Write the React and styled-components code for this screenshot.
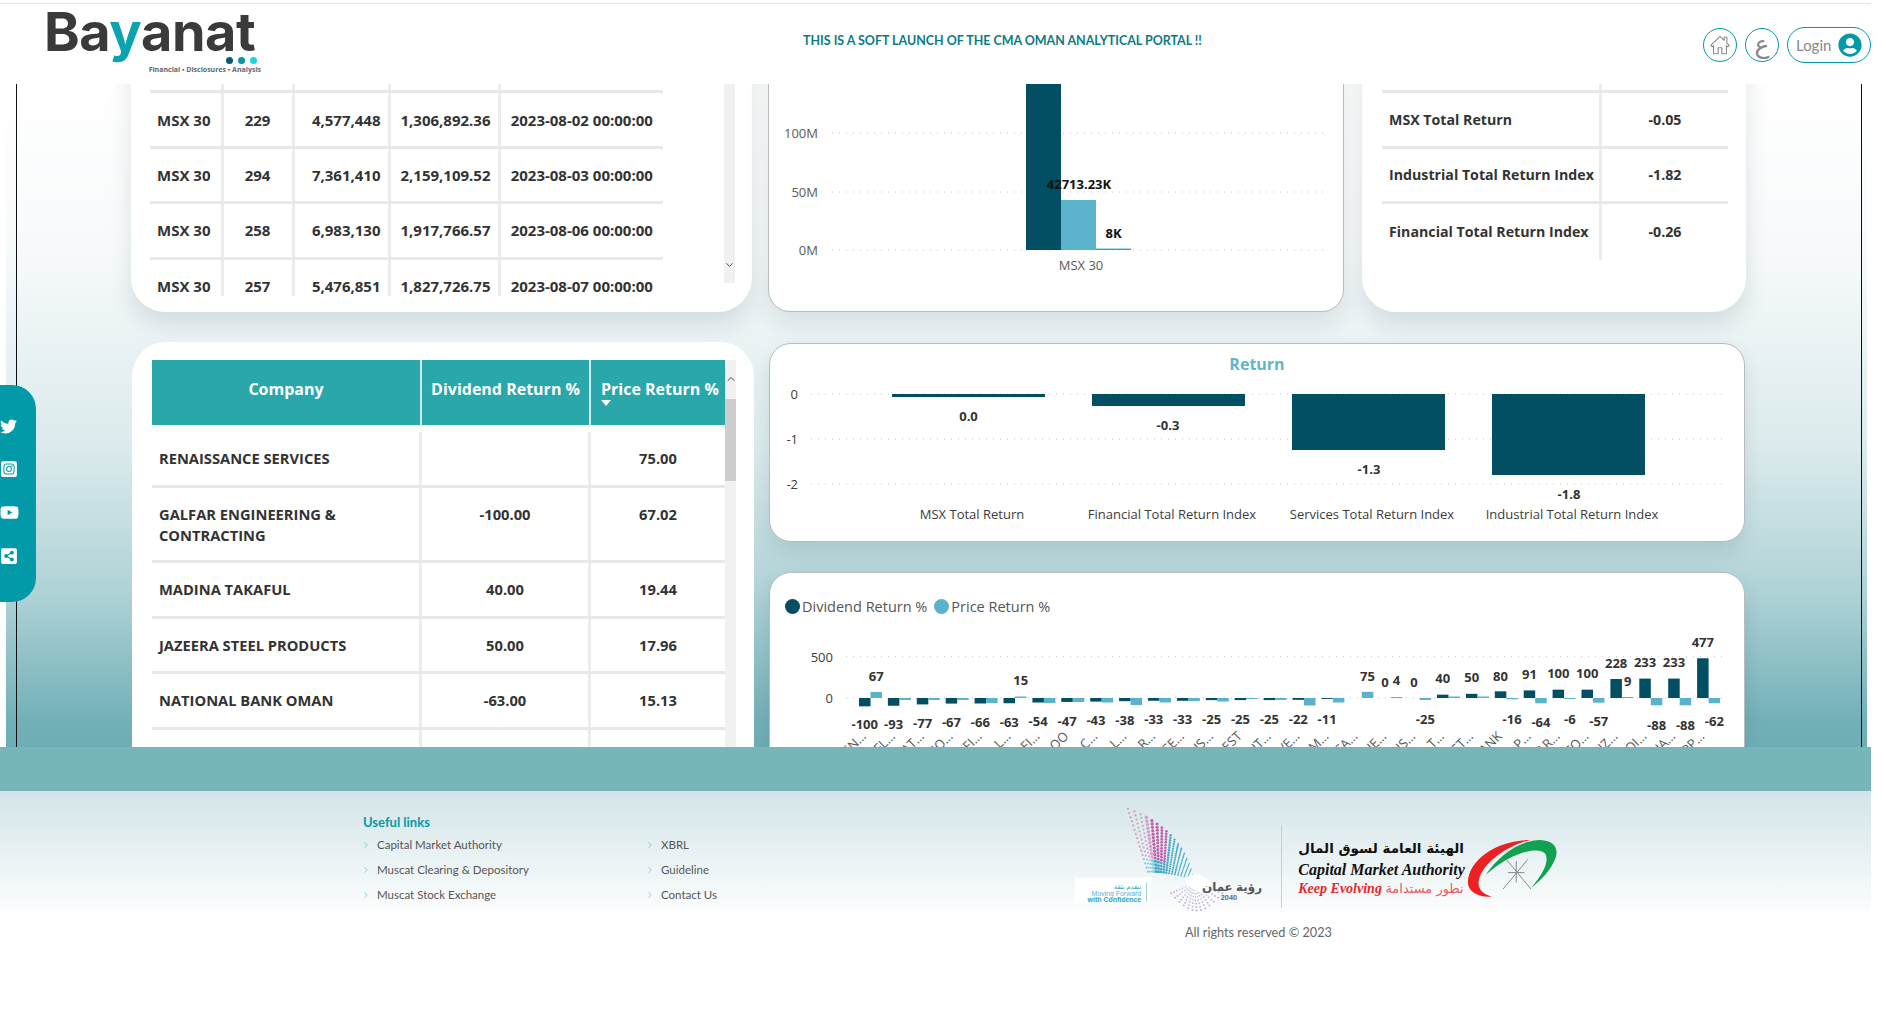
import styled, { createGlobalStyle } from "styled-components";
import { ChevronDown, ChevronUp, ChevronRight } from "lucide-react";
import { FaTwitter, FaInstagramSquare, FaYoutube, FaShareAltSquare, FaUserCircle } from "react-icons/fa";

const DARK = "#024e62";
const LIGHT = "#5bb3cb";
const TEAL = "#029aa8";

const topRows = [
	["MSX 30", "231", "5,120,304", "1,422,018.40", "2023-08-01 00:00:00"],
	["MSX 30", "229", "4,577,448", "1,306,892.36", "2023-08-02 00:00:00"],
	["MSX 30", "294", "7,361,410", "2,159,109.52", "2023-08-03 00:00:00"],
	["MSX 30", "258", "6,983,130", "1,917,766.57", "2023-08-06 00:00:00"],
	["MSX 30", "257", "5,476,851", "1,827,726.75", "2023-08-07 00:00:00"],
];

const indexRows = [
	["", ""],
	["MSX Total Return", "-0.05"],
	["Industrial Total Return Index", "-1.82"],
	["Financial Total Return Index", "-0.26"],
];

const companies = [
	["RENAISSANCE SERVICES", "", "75.00"],
	["GALFAR ENGINEERING & CONTRACTING", "-100.00", "67.02"],
	["MADINA TAKAFUL", "40.00", "19.44"],
	["JAZEERA STEEL PRODUCTS", "50.00", "17.96"],
	["NATIONAL BANK OMAN", "-63.00", "15.13"],
	["", "", ""],
];

const returnBars = [
	{ name: "MSX Total Return", x: 892, bottom: 397, value: "0.0", valueX: 968.5, valueY: 416, nameX: 972 },
	{ name: "Financial Total Return Index", x: 1092, bottom: 406, value: "-0.3", valueX: 1168, valueY: 425, nameX: 1172 },
	{ name: "Services Total Return Index", x: 1292, bottom: 450, value: "-1.3", valueX: 1369, valueY: 469, nameX: 1372 },
	{ name: "Industrial Total Return Index", x: 1492, bottom: 475, value: "-1.8", valueX: 1569, valueY: 494, nameX: 1572 },
];

// dividend return, then the price bar height in px (negative goes down)
const dividend = [-100, -93, -77, -67, -66, -63, -54, -47, -43, -38, -33, -33, -25, -25, -25, -22, -11, 0, 0, 0, 40, 50, 80, 91, 100, 100, 228, 233, 233, 477];
const priceBars = [6, -2, -2, -2, -5, 1.5, -5, -4, -4.5, -7, -4.5, -3, -3.5, -1, -2, -7.5, -4.5, 6.2, 1, -2, 1.5, 1.5, -1.3, -5.3, -1, -4.7, 1, -7.3, -7.3, -5.2];
const axisEnds = ["EN…", "FL…", "AT…", "IO…", "FI…", "L…", "FI…", "OO", "C…", "L…", "R…", "CE…", "US…", "EST", "UT…", "VE…", "M…", "CA…", "JE…", "IS…", "T…", "ST…", "ANK", "L P…", "AR…", "CO…", "IZ…", "OI…", "IA…", "PP…"];

// group, 0 dark / 1 light, label, y
const pointLabels = [
	[0, 0, "-100", 725], [1, 0, "-93", 725], [2, 0, "-77", 724.3], [3, 0, "-67", 723.3], [4, 0, "-66", 722.7],
	[5, 0, "-63", 722.7], [6, 0, "-54", 722.3], [7, 0, "-47", 721.7], [8, 0, "-43", 721], [9, 0, "-38", 720.7],
	[10, 0, "-33", 720.3], [11, 0, "-33", 720.3], [12, 0, "-25", 720], [13, 0, "-25", 720], [14, 0, "-25", 720],
	[15, 0, "-22", 720], [16, 0, "-11", 719.7], [0, 1, "67", 677.3], [5, 1, "15", 681], [17, 1, "75", 676.7],
	[18, 0, "0", 683.3], [18, 1, "4", 681], [19, 0, "0", 683.3], [19, 1, "-25", 720], [20, 0, "40", 679],
	[21, 0, "50", 678.3], [22, 0, "80", 676.7], [22, 1, "-16", 720], [23, 0, "91", 675.3], [23, 1, "-64", 723.3],
	[24, 0, "100", 674.3], [24, 1, "-6", 720], [25, 0, "100", 674.3], [25, 1, "-57", 722.3], [26, 0, "228", 663.7],
	[26, 1, "9", 682], [27, 0, "233", 663.3], [27, 1, "-88", 725.7], [28, 0, "233", 663.3], [28, 1, "-88", 725.7],
	[29, 0, "477", 643.3], [29, 1, "-62", 722.3],
];

const leftLinks = ["Capital Market Authority", "Muscat Clearing & Depository", "Muscat Stock Exchange"];
const rightLinks = ["XBRL", "Guideline", "Contact Us"];

// dots of the Oman Vision logo: a fan running into a hub, and a smaller one below it
const swirlDots = [];
for (let i = 0; i < 16; i++) {
	const a = i / 15;
	const sx = 205 + a * 60;
	const sy = 25 + a * 190;
	const cx = 375 - a * 60;
	const cy = 90 + a * 120;
	for (let j = 0; j < 17; j++) {
		const t = j / 17;
		const x = (1 - t) * (1 - t) * sx + 2 * t * (1 - t) * cx + t * t * 405;
		const y = (1 - t) * (1 - t) * sy + 2 * t * (1 - t) * cy + t * t * 240;
		const fill = t < 0.42 && a < 0.8 ? "#b8489d" : "#2a9fc0";
		swirlDots.push({ x, y, r: 1 + (1 - t) * 5 * (t < 0.12 ? 0.5 : 1), fill, o: t < 0.18 ? 0.45 : 0.85 });
	}
}
for (let i = 0; i < 13; i++) {
	const a = i / 12;
	const ex = 335 + a * 155;
	const ey = 280 + Math.sin(a * Math.PI) * 52;
	for (let j = 1; j < 9; j++) {
		const t = j / 8;
		swirlDots.push({
			x: 405 + (ex - 405) * t,
			y: 250 + (ey - 250) * t,
			r: 1.2 + t * 1.8,
			fill: t < 0.35 ? "#2a9fc0" : "#b39ad6",
			o: 0.8,
		});
	}
}

const App = () => {
	return (
		<Page>
			<GlobalStyle />
			<Header>
				<Logo>
					<LogoWord>
						Ba<LogoY>y</LogoY>anat
					</LogoWord>
					<LogoDots>
						<LogoDot $color="#035f70" />
						<LogoDot $color="#0a93a3" />
						<LogoDot $color="#1fd2e2" />
					</LogoDots>
					<LogoTag>Financial ▪ Disclosures ▪ Analysis</LogoTag>
				</Logo>
				<Notice>THIS IS A SOFT LAUNCH OF THE CMA OMAN ANALYTICAL PORTAL !!</Notice>
				<HeaderActions>
					<RoundButton>
						<svg width="22" height="22" viewBox="0 0 24 24" fill="none" stroke="#8a8a8a" strokeWidth="1.2" strokeLinejoin="round">
							<path d="M2 12.5 12 2.5l4.5 4.5V3.5h3v6.5l2.5 2.5-1.5 1.5-1.500-1.300V21.500h-5v-6.500h-4V21.500h-5V12.700L3.500 14z" />
						</svg>
					</RoundButton>
					<RoundButton>
						<ArabicGlyph>ع</ArabicGlyph>
					</RoundButton>
					<LoginButton>
						Login
						<FaUserCircle size={24} color={TEAL} />
					</LoginButton>
				</HeaderActions>
			</Header>

			<SidePanel>
				<FaTwitter size={17} color="#fff" />
				<FaInstagramSquare size={18} color="#fff" />
				<FaYoutube size={19} color="#fff" />
				<FaShareAltSquare size={18} color="#fff" />
			</SidePanel>

			<Main>
				<Frame>
					<TopRow>
						<TableCard>
							<TopTable>
								{topRows.map((row) => (
									<TopTableRow key={row[4]}>
										<Cell>{row[0]}</Cell>
										<Cell $align="center">{row[1]}</Cell>
										<Cell $align="right">{row[2]}</Cell>
										<Cell $align="right">{row[3]}</Cell>
										<Cell $align="center" $last>
											{row[4]}
										</Cell>
									</TopTableRow>
								))}
							</TopTable>
							<TopScrollTrack>
								<ChevronDown size={12} color="#444" />
							</TopScrollTrack>
						</TableCard>

						<ChartCard>
							<ChartSvg width="574" height="290" viewBox="769 21 574 290">
								{[
									["100M", 133],
									["50M", 192],
									["0M", 250],
								].map(([label, y]) => (
									<g key={label}>
										<GridLine x1="832" x2="1328" y1={y} y2={y} />
										<AxisText x="818" y={y} textAnchor="end">
											{label}
										</AxisText>
									</g>
								))}
								<rect x="1026" y="21" width="35" height="229" fill={DARK} />
								<rect x="1061" y="200" width="35" height="50" fill={LIGHT} />
								<rect x="1096" y="248.600" width="35" height="1.400" fill="#2aa7aa" />
								<ValueText x="1079" y="184" textAnchor="middle" $dark>
									42713.23K
								</ValueText>
								<ValueText x="1113.500" y="233" textAnchor="middle" $dark>
									8K
								</ValueText>
								<AxisText x="1081" y="265" textAnchor="middle">
									MSX 30
								</AxisText>
							</ChartSvg>
						</ChartCard>

						<IndexCard>
							{indexRows.map((row, i) => (
								<IndexRow key={i} $last={i === indexRows.length - 1}>
									<IndexName>{row[0]}</IndexName>
									<IndexValue>{row[1]}</IndexValue>
								</IndexRow>
							))}
						</IndexCard>
					</TopRow>

					<BottomRow>
						<CompanyCard>
							<CompanyTable>
								<CompanyHead>
									<HeadCell $center>Company</HeadCell>
									<HeadCell $center>Dividend Return %</HeadCell>
									<HeadCell>
										Price Return %
										<SortMark />
									</HeadCell>
								</CompanyHead>
								<CompanyBody>
									{companies.map((row, i) => (
										<CompanyRow key={i} $tall={i === 1}>
											<CompanyCell>{row[0]}</CompanyCell>
											<CompanyCell $center>{row[1]}</CompanyCell>
											<CompanyCell $center $last>
												{row[2]}
											</CompanyCell>
										</CompanyRow>
									))}
								</CompanyBody>
							</CompanyTable>
							<CompanyScroll>
								<ChevronUp size={12} color="#444" />
								<CompanyThumb />
							</CompanyScroll>
						</CompanyCard>

						<ChartColumn>
							<ReturnCard>
								<ReturnTitle>Return</ReturnTitle>
								<ChartSvg width="974" height="157" viewBox="770 384 974 157">
									{[
										["0", 394],
										["-1", 439],
										["-2", 484],
									].map(([label, y]) => (
										<g key={label}>
											<GridLine x1="811" x2="1726" y1={y} y2={y} />
											<AxisText x="798" y={y} textAnchor="end" $dark>
												{label}
											</AxisText>
										</g>
									))}
									{returnBars.map((bar) => (
										<g key={bar.name}>
											<rect x={bar.x} y="394" width="153" height={bar.bottom - 394} fill={DARK} />
											<ValueText x={bar.valueX} y={bar.valueY} textAnchor="middle">
												{bar.value}
											</ValueText>
											<AxisText x={bar.nameX} y="514" textAnchor="middle" $dark>
												{bar.name}
											</AxisText>
										</g>
									))}
								</ChartSvg>
							</ReturnCard>

							<ReturnsCard>
								<Legend>
									<LegendDot $color={DARK} />
									<LegendLabel>Dividend Return %</LegendLabel>
									<LegendDot $color={LIGHT} />
									<LegendLabel>Price Return %</LegendLabel>
								</Legend>
								<ChartSvg width="974" height="140" viewBox="770 616 974 140">
									{[
										["500", 657.700],
										["0", 699],
									].map(([label, y]) => (
										<g key={label}>
											<GridLine x1="846" x2="1726" y1={y} y2={y} />
											<AxisText x="833" y={y} textAnchor="end" $dark>
												{label}
											</AxisText>
										</g>
									))}
									{dividend.map((value, i) => {
										const x = 859 + i * 28.9;
										const height = Math.abs(value) * 0.0833;
										return (
											<g key={i}>
												<rect x={x} y={value > 0 ? 699 - height : 699} width="11.500" height={height} fill={DARK} />
												<rect
													x={x + 11.5}
													y={priceBars[i] > 0 ? 699 - priceBars[i] : 699}
													width="11.500"
													height={Math.abs(priceBars[i])}
													fill={LIGHT}
												/>
												<SlantText transform={`rotate(-45 ${x + 8} 738)`} x={x + 8} y="738" textAnchor="end">
													{axisEnds[i]}
												</SlantText>
											</g>
										);
									})}
									{pointLabels.map(([group, side, label, y]) => (
										<ValueText key={`${group}-${side}`} x={864.75 + group * 28.9 + side * 11.5} y={y} textAnchor="middle">
											{label}
										</ValueText>
									))}
								</ChartSvg>
							</ReturnsCard>
						</ChartColumn>
					</BottomRow>
				</Frame>
			</Main>

			<Band />

			<Footer>
				<LinksBlock>
					<LinksTitle>Useful links</LinksTitle>
					<LinksGrid>
						<LinkColumn>
							{leftLinks.map((link) => (
								<FooterLink key={link}>
									<ChevronRight size={10} color="#7cc4ca" />
									{link}
								</FooterLink>
							))}
						</LinkColumn>
						<LinkColumn>
							{rightLinks.map((link) => (
								<FooterLink key={link}>
									<ChevronRight size={10} color="#7cc4ca" />
									{link}
								</FooterLink>
							))}
						</LinkColumn>
					</LinksGrid>
				</LinksBlock>
				<LogosBlock>
					<LogoRow>
						<svg width="197" height="107" viewBox="45 15 590 320">
							{swirlDots.map((dot, i) => (
								<circle key={i} cx={dot.x} cy={dot.y} r={dot.r} fill={dot.fill} opacity={dot.o} />
							))}
							<ellipse cx="418" cy="250" rx="40" ry="24" fill="#fff" transform="rotate(20 418 250)" />
							<SwirlText x="610" y="272" textAnchor="end" fontSize="36" fontWeight="700" fill="#555">
								رؤية عمان
							</SwirlText>
							<SwirlText x="510" y="300" textAnchor="middle" fontSize="22" fontWeight="700" fill="#666">
								2040
							</SwirlText>
							<rect x="45" y="232" width="230" height="78" fill="#fff" opacity="0.85" />
							<line x1="261" x2="261" y1="248" y2="306" stroke="#9fd3e2" strokeWidth="3" />
							<SwirlText x="245" y="266" textAnchor="end" fontSize="20" fill="#2c9fc0">
								نتقدم بثقة
							</SwirlText>
							<SwirlText x="245" y="288" textAnchor="end" fontSize="21" fill="#55b4d0">
								Moving Forward
							</SwirlText>
							<SwirlText x="245" y="306" textAnchor="end" fontSize="21" fontWeight="700" fill="#2c9fc0">
								with Confidence
							</SwirlText>
						</svg>
						<LogoDivider />
						<CmaText>
							<CmaArabic>الهيئة العامة لسوق المال</CmaArabic>
							<CmaName>Capital Market Authority</CmaName>
							<CmaTagline>
								Keep Evolving <CmaTaglineArabic>نطور مستدامة</CmaTaglineArabic>
							</CmaTagline>
						</CmaText>
						<CmaEmblem width="96" height="65" viewBox="1222 108 290 195">
							<path d="M1415 116C1320 115 1228 175 1228 245 1228 275 1265 292 1300 288 1270 280 1255 262 1262 235 1272 190 1340 135 1415 116Z" fill="#ed2024" />
							<path d="M1282 222C1320 165 1380 120 1440 116 1490 115 1505 140 1495 170 1483 205 1450 240 1420 262 1455 220 1475 185 1465 160 1450 135 1370 145 1282 222Z" fill="#12a150" />
							<path d="M1345 175 1420 265M1410 175 1335 265M1375 180V245M1350 215H1400" stroke="#888" strokeWidth="3" fill="none" />
						</CmaEmblem>
					</LogoRow>
					<Copyright>All rights reserved © 2023</Copyright>
				</LogosBlock>
			</Footer>
		</Page>
	);
};

export default App;

const GlobalStyle = createGlobalStyle`
	html, body {
		margin: 0;
		padding: 0;
		background: #fff;
		overflow: hidden;
	}
	* {
		box-sizing: border-box;
	}
`;

const Page = styled.div`
	position: relative;
	width: 1871px;
	height: 1028px;
	overflow: hidden;
	font-family: "Open Sans", "Noto Sans", sans-serif;
	color: #333;
`;

const Header = styled.header`
	display: grid;
	grid-template-columns: 803px 1fr auto;
	align-items: center;
	height: 81px;
	margin-top: 3px;
	border-top: 1px solid #e2e2e2;
`;

const Logo = styled.div`
	display: flex;
	flex-direction: column;
	width: 214px;
	height: 66px;
	margin-left: 44px;
	margin-top: -6px;
`;

const LogoWord = styled.div`
	font-family: Inter, sans-serif;
	font-weight: 700;
	font-size: 54px;
	line-height: 48px;
	letter-spacing: -0.4px;
	color: #3a3a3c;
	white-space: nowrap;
`;

const LogoY = styled.span`
	color: #0ba3af;
`;

const LogoDots = styled.div`
	display: flex;
	justify-content: flex-end;
	gap: 5px;
	padding-right: 1px;
	margin-top: 1px;
`;

const LogoDot = styled.span`
	width: 7px;
	height: 7px;
	border-radius: 50%;
	background: ${(props) => props.$color};
`;

const LogoTag = styled.div`
	align-self: flex-end;
	margin-top: 1px;
	margin-right: -3px;
	font-size: 7px;
	line-height: 9px;
	font-weight: 700;
	white-space: nowrap;
	color: #666;
`;

const Notice = styled.div`
	font-family: Lato, sans-serif;
	font-weight: 700;
	font-size: 14px;
	margin-top: -9px;
	color: #0b7b85;
	white-space: nowrap;
	transform: scaleX(0.89);
	transform-origin: left center;
`;

const HeaderActions = styled.div`
	display: flex;
	align-items: center;
	gap: 8px;
	margin-top: 2px;
`;

const RoundButton = styled.div`
	display: flex;
	align-items: center;
	justify-content: center;
	width: 34px;
	height: 34px;
	border: 1px solid ${TEAL};
	border-radius: 50%;
`;

const ArabicGlyph = styled.span`
	font-family: "DejaVu Sans", sans-serif;
	font-size: 25px;
	line-height: 30px;
	color: #888;
`;

const LoginButton = styled.div`
	display: flex;
	align-items: center;
	justify-content: space-between;
	width: 84px;
	height: 36px;
	padding: 0 8px;
	border: 1px solid ${TEAL};
	border-radius: 18px;
	font-family: Lato, sans-serif;
	font-size: 15px;
	color: #888;
`;

const SidePanel = styled.aside`
	position: absolute;
	left: 0;
	top: 385px;
	z-index: 5;
	display: flex;
	flex-direction: column;
	align-items: flex-start;
	gap: 25px;
	width: 36px;
	height: 217px;
	padding-top: 33px;
	background: ${TEAL};
	border-radius: 0 24px 24px 0;
`;

const Main = styled.main`
	height: 663px;
	margin-left: 6px;
	margin-right: 4px;
	overflow: hidden;
	background: linear-gradient(to bottom, #fff 0%, #f7fafb 25%, #dbeaec 55%, #aed2d6 77%, #72b0b8 96%, #6fadb6 100%);
`;

const Frame = styled.div`
	display: flow-root;
	height: 100%;
	margin: 0 5px 0 10px;
	padding-left: 114px;
	border-left: 1px solid #111;
	border-right: 1px solid #111;
`;

const TopRow = styled.div`
	display: flex;
	gap: 16px;
	margin-top: -64px;
	height: 292px;
`;

const TableCard = styled.section`
	display: flex;
	justify-content: space-between;
	align-items: flex-start;
	width: 621px;
	height: 292px;
	padding: 18px 17px 0 19px;
	background: #fff;
	border-radius: 34px;
	box-shadow: 0 12px 24px rgba(0, 40, 50, 0.12);
`;

const TopTable = styled.div`
	width: 513px;
	height: 258px;
	overflow: hidden;
`;

const TopTableRow = styled.div`
	display: grid;
	grid-template-columns: 73.5px 71px 96px 110px 162.5px;
	height: 55.4px;
	border-bottom: 3px solid #e8e8e8;
`;

const Cell = styled.div`
	display: flex;
	align-items: center;
	justify-content: ${(props) =>
		props.$align === "center" ? "center" : props.$align === "right" ? "flex-end" : "flex-start"};
	padding: 0 7px;
	font-size: 15px;
	font-weight: 700;
	white-space: nowrap;
	border-right: ${(props) => (props.$last ? "none" : "3px solid #ececec")};
`;

const TopScrollTrack = styled.div`
	display: flex;
	align-items: flex-end;
	justify-content: center;
	width: 11px;
	height: 245px;
	padding-bottom: 12px;
	background: #f1f1f1;
`;

const ChartCard = styled.section`
	width: 576px;
	height: 292px;
	background: #fff;
	border: 1px solid #b9bcbd;
	border-radius: 22px;
	overflow: hidden;
	box-shadow: 0 12px 24px rgba(0, 40, 50, 0.1);
`;

const ChartSvg = styled.svg`
	display: block;
`;

const GridLine = styled.line`
	stroke: #c4c4c4;
	stroke-width: 1;
	stroke-dasharray: 1 6;
`;

const AxisText = styled.text`
	font-size: 13px;
	dominant-baseline: central;
	fill: ${(props) => (props.$dark ? "#3c3c3c" : "#5a5a5a")};
`;

const ValueText = styled.text`
	font-size: 13px;
	font-weight: 700;
	dominant-baseline: central;
	fill: ${(props) => (props.$dark ? "#111" : "#333")};
`;

const SlantText = styled.text`
	font-size: 13px;
	fill: #555;
`;

const IndexCard = styled.section`
	width: 384px;
	height: 292px;
	margin-left: 2px;
	padding: 18px 18px 0 20px;
	background: #fff;
	border-radius: 34px;
	box-shadow: 0 12px 24px rgba(0, 40, 50, 0.12);
`;

const IndexRow = styled.div`
	display: grid;
	grid-template-columns: 220px 1fr;
	height: 55.4px;
	border-bottom: ${(props) => (props.$last ? "none" : "3px solid #e8e8e8")};
`;

const IndexName = styled.div`
	display: flex;
	align-items: center;
	padding-left: 7px;
	font-size: 14.2px;
	font-weight: 700;
	white-space: nowrap;
	border-right: 3px solid #ececec;
`;

const IndexValue = styled.div`
	display: flex;
	align-items: center;
	justify-content: center;
	font-size: 14.2px;
	font-weight: 700;
`;

const BottomRow = styled.div`
	display: flex;
	gap: 15px;
	margin-top: 30px;
	margin-left: 1px;
`;

const CompanyCard = styled.section`
	display: flex;
	align-items: flex-start;
	width: 622px;
	height: 460px;
	padding: 18px 0 0 20px;
	background: #fff;
	border-radius: 34px 34px 0 0;
`;

const CompanyTable = styled.div`
	width: 573px;
`;

const CompanyHead = styled.div`
	display: grid;
	grid-template-columns: 270px 169px 134px;
	height: 65px;
	background: #2aa7aa;
`;

const HeadCell = styled.div`
	position: relative;
	display: flex;
	align-items: center;
	justify-content: ${(props) => (props.$center ? "center" : "flex-start")};
	padding: 0 10px 8px;
	border-right: 2px solid #cfe9ea;
	color: #fff;
	font-size: 16px;
	font-weight: 700;
	white-space: nowrap;
	&:last-child {
		border-right: none;
	}
`;

const SortMark = styled.span`
	position: absolute;
	left: 10px;
	top: 40px;
	width: 0;
	height: 0;
	border-left: 5px solid transparent;
	border-right: 5px solid transparent;
	border-top: 6px solid #fff;
`;

const CompanyBody = styled.div`
	padding-top: 7px;
`;

const CompanyRow = styled.div`
	display: grid;
	grid-template-columns: 270px 169px 134px;
	height: ${(props) => (props.$tall ? "75.500px" : "55.500px")};
	border-bottom: 3px solid #e8e8e8;
`;

const CompanyCell = styled.div`
	padding: 16px 7px 0;
	font-size: 14.7px;
	line-height: 21px;
	font-weight: 700;
	text-align: ${(props) => (props.$center ? "center" : "left")};
	border-right: ${(props) => (props.$last ? "none" : "3px solid #ececec")};
`;

const CompanyScroll = styled.div`
	display: flex;
	flex-direction: column;
	align-items: center;
	width: 11px;
	height: 430px;
	padding-top: 13px;
	background: #f1f1f1;
`;

const CompanyThumb = styled.div`
	width: 100%;
	height: 82px;
	margin-top: 14px;
	background: #cdcdcd;
`;

const ChartColumn = styled.div`
	display: flex;
	flex-direction: column;
	gap: 30px;
	margin-top: 1px;
`;

const ReturnCard = styled.section`
	width: 976px;
	height: 199px;
	background: #fff;
	border: 1px solid #b9bcbd;
	border-radius: 22px;
	overflow: hidden;
	box-shadow: 0 10px 20px rgba(0, 40, 50, 0.1);
`;

const ReturnTitle = styled.h3`
	margin: 0;
	height: 40px;
	line-height: 40px;
	text-align: center;
	font-size: 16px;
	font-weight: 700;
	color: #5fb6cc;
`;

const ReturnsCard = styled(ReturnCard)`
	height: 220px;
	border-radius: 22px 22px 0 0;
`;

const Legend = styled.div`
	display: flex;
	align-items: center;
	height: 18px;
	margin-top: 24px;
	padding-left: 15px;
`;

const LegendDot = styled.span`
	width: 15px;
	height: 15px;
	margin-right: 2px;
	border-radius: 50%;
	background: ${(props) => props.$color};
`;

const LegendLabel = styled.span`
	margin-right: 7px;
	font-size: 14.5px;
	color: #555;
	white-space: nowrap;
`;

const Band = styled.div`
	height: 44px;
	background: #78b5bb;
`;

const Footer = styled.footer`
	display: flex;
	align-items: flex-start;
	height: 237px;
	padding: 14px 0 0 363px;
	background: linear-gradient(to bottom, #d3e4e8 0%, #fff 130px);
`;

const LinksBlock = styled.div`
	width: 712px;
	padding-top: 9px;
`;

const LinksTitle = styled.div`
	height: 18px;
	font-family: Lato, sans-serif;
	font-size: 13px;
	font-weight: 700;
	color: #029aa8;
`;

const LinksGrid = styled.div`
	display: grid;
	grid-template-columns: 284px 1fr;
`;

const LinkColumn = styled.div`
	display: flex;
	flex-direction: column;
`;

const FooterLink = styled.div`
	display: flex;
	align-items: center;
	gap: 6px;
	height: 25px;
	margin-left: -2px;
	font-family: Lato, sans-serif;
	font-size: 11.5px;
	color: #555;
	white-space: nowrap;
`;

const LogosBlock = styled.div`
	display: flex;
	flex-direction: column;
	width: 486px;
`;

const LogoRow = styled.div`
	display: flex;
	align-items: flex-start;
	height: 107px;
`;

const SwirlText = styled.text`
	font-family: "Liberation Sans", "DejaVu Sans", sans-serif;
`;

const LogoDivider = styled.div`
	width: 1px;
	height: 83px;
	margin: 20px 0 0 11px;
	background: #ccc;
`;

const CmaText = styled.div`
	display: flex;
	flex-direction: column;
	align-items: flex-start;
	width: 169px;
	margin: 33px 0 0 16px;
`;

const CmaArabic = styled.div`
	font-family: "DejaVu Sans", serif;
	font-weight: 700;
	font-size: 13.5px;
	line-height: 21px;
	color: #111;
	white-space: nowrap;
`;

const CmaName = styled.div`
	font-family: "Liberation Serif", serif;
	font-style: italic;
	font-weight: 700;
	font-size: 16px;
	line-height: 21px;
	color: #111;
	white-space: nowrap;
`;

const CmaTagline = styled.div`
	font-family: "Liberation Serif", serif;
	font-style: italic;
	font-weight: 700;
	font-size: 14px;
	line-height: 18px;
	color: #e8262c;
	white-space: nowrap;
`;

const CmaTaglineArabic = styled.span`
	font-family: "DejaVu Sans", serif;
	font-style: normal;
	font-weight: 400;
	font-size: 13px;
	color: #ef5a5e;
`;

const CmaEmblem = styled.svg`
	margin-top: 32px;
`;

const Copyright = styled.div`
	width: 100%;
	margin-top: 12px;
	padding-left: 110px;
	font-family: Lato, sans-serif;
	font-size: 12.7px;
	color: #666;
	white-space: nowrap;
`;
